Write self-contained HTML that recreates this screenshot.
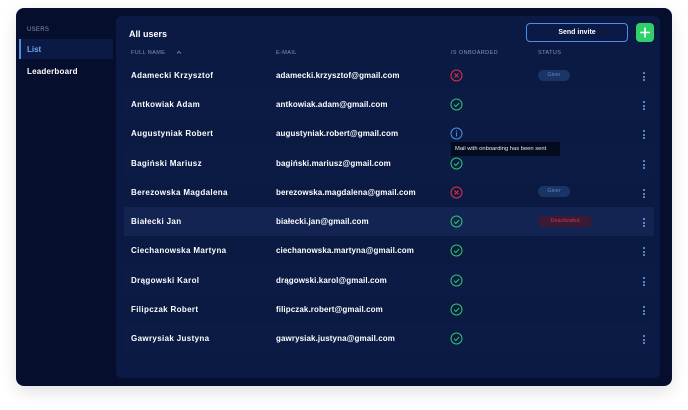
<!DOCTYPE html>
<html><head><meta charset="utf-8"><style>
*{margin:0;padding:0;box-sizing:border-box}
body{width:688px;height:410px;background:#fff;font-family:"Liberation Sans",sans-serif;position:relative;overflow:hidden}
.card{position:absolute;left:16px;top:8px;width:656px;height:378px;background:#050f2d;border-radius:8px;box-shadow:0 6px 16px rgba(0,0,0,.12)}
.side-h{position:absolute;left:27px;top:27px;font-size:6px;color:#8a93b0;letter-spacing:.3px}
.list{position:absolute;left:19px;top:39px;width:94px;height:20px;background:#0a1a44;border-left:2px solid #4d8fe6;color:#6fa6f0;font-size:8px;font-weight:bold;padding:6px 0 0 6px}
.lead{position:absolute;left:27px;top:67px;font-size:8px;font-weight:bold;color:#fff;letter-spacing:.2px}
.panel{position:absolute;left:116px;top:16px;width:544px;height:362px;background:#0b1a45;border-radius:6px}
.title{position:absolute;left:129px;top:29px;color:#fff;font-size:9px;font-weight:bold}
.btn{position:absolute;left:526px;top:23px;width:102px;height:19px;border:1px solid #4d8fe6;border-radius:4px;color:#fff;font-size:7px;font-weight:bold;text-align:center;line-height:17px}
.plus{position:absolute;left:636px;top:23px;width:18px;height:19px;background:#2fd06a;border-radius:4px}
.th{position:absolute;top:50px;font-size:5.5px;color:#8a93b0;letter-spacing:.4px}
.row{position:absolute;left:124px;width:530px;height:29px}
.n{position:absolute;left:131px;font-size:8px;font-weight:bold;color:#fff;letter-spacing:.35px}
.e{position:absolute;left:276px;font-size:8px;font-weight:bold;color:#fff;letter-spacing:.1px}
.ic{position:absolute;left:450px;width:13px;height:13px}
.dots{position:absolute;left:643px;width:2px}
.dots i{display:block;width:2px;height:2px;background:#6fa6f0;margin-bottom:1.5px;border-radius:1px}
.badge{position:absolute;left:538px;height:11px;border-radius:6px;font-size:5.5px;text-align:center;line-height:11px}
</style></head><body>
<div class="card"></div>
<div class="side-h">USERS</div>
<div class="list">List</div>
<div class="lead">Leaderboard</div>
<div class="panel"></div>
<div class="title">All users</div>
<div class="btn">Send invite</div>
<div class="plus"><svg width="18" height="19"><path d="M9 4.5v10M4 9.5h10" stroke="#fff" stroke-width="1.6"/></svg></div>
<div class="th" style="left:131px">FULL NAME</div>
<svg style="position:absolute;left:176px;top:50px" width="6" height="4"><path d="M1 3.5L3 1.5 5 3.5" fill="none" stroke="#8a93b0" stroke-width=".8"/></svg>
<div class="th" style="left:276px">E-MAIL</div>
<div class="th" style="left:451px">IS ONBOARDED</div>
<div class="th" style="left:538px">STATUS</div>

<div class="row" style="top:61px;background:#0b1a43"></div>
<div class="row" style="top:90px;background:#0c1b46"></div>
<div class="row" style="top:119px;background:#0b1a43"></div>
<div class="row" style="top:149px;background:#0c1b46"></div>
<div class="row" style="top:178px;background:#0b1a43"></div>
<div class="row" style="top:207px;background:#132452"></div>
<div class="row" style="top:236px;background:#0b1a43"></div>
<div class="row" style="top:266px;background:#0c1b46"></div>
<div class="row" style="top:295px;background:#0b1a43"></div>
<div class="row" style="top:324px;background:#0c1b46"></div>

<div class="n" style="top:71px">Adamecki Krzysztof</div><div class="e" style="top:71px">adamecki.krzysztof@gmail.com</div>
<div class="n" style="top:100px">Antkowiak Adam</div><div class="e" style="top:100px">antkowiak.adam@gmail.com</div>
<div class="n" style="top:129px">Augustyniak Robert</div><div class="e" style="top:129px">augustyniak.robert@gmail.com</div>
<div class="n" style="top:159px">Bagiński Mariusz</div><div class="e" style="top:159px">bagiński.mariusz@gmail.com</div>
<div class="n" style="top:188px">Berezowska Magdalena</div><div class="e" style="top:188px">berezowska.magdalena@gmail.com</div>
<div class="n" style="top:217px">Białecki Jan</div><div class="e" style="top:217px">białecki.jan@gmail.com</div>
<div class="n" style="top:246px">Ciechanowska Martyna</div><div class="e" style="top:246px">ciechanowska.martyna@gmail.com</div>
<div class="n" style="top:276px">Drągowski Karol</div><div class="e" style="top:276px">drągowski.karol@gmail.com</div>
<div class="n" style="top:305px">Filipczak Robert</div><div class="e" style="top:305px">filipczak.robert@gmail.com</div>
<div class="n" style="top:334px">Gawrysiak Justyna</div><div class="e" style="top:334px">gawrysiak.justyna@gmail.com</div>

<svg class="ic" style="top:69px" viewBox="0 0 13 13"><circle cx="6.5" cy="6.5" r="5.5" fill="none" stroke="#e0304a" stroke-width="1"/><path d="M4.5 4.5l4 4M8.5 4.5l-4 4" stroke="#e0304a" stroke-width="1"/></svg>
<svg class="ic" style="top:98px" viewBox="0 0 13 13"><circle cx="6.5" cy="6.5" r="5.5" fill="none" stroke="#2fc66a" stroke-width="1"/><path d="M4 6.7l1.8 1.8L9.2 5" fill="none" stroke="#2fc66a" stroke-width="1"/></svg>
<svg class="ic" style="top:127px" viewBox="0 0 13 13"><circle cx="6.5" cy="6.5" r="5.5" fill="none" stroke="#4d8fe6" stroke-width="1"/><path d="M6.5 5.5v4" stroke="#4d8fe6" stroke-width="1"/><circle cx="6.5" cy="4" r=".6" fill="#4d8fe6"/></svg>
<svg class="ic" style="top:157px" viewBox="0 0 13 13"><circle cx="6.5" cy="6.5" r="5.5" fill="none" stroke="#2fc66a" stroke-width="1"/><path d="M4 6.7l1.8 1.8L9.2 5" fill="none" stroke="#2fc66a" stroke-width="1"/></svg>
<svg class="ic" style="top:186px" viewBox="0 0 13 13"><circle cx="6.5" cy="6.5" r="5.5" fill="none" stroke="#e0304a" stroke-width="1"/><path d="M4.5 4.5l4 4M8.5 4.5l-4 4" stroke="#e0304a" stroke-width="1"/></svg>
<svg class="ic" style="top:215px" viewBox="0 0 13 13"><circle cx="6.5" cy="6.5" r="5.5" fill="none" stroke="#2fc66a" stroke-width="1"/><path d="M4 6.7l1.8 1.8L9.2 5" fill="none" stroke="#2fc66a" stroke-width="1"/></svg>
<svg class="ic" style="top:244px" viewBox="0 0 13 13"><circle cx="6.5" cy="6.5" r="5.5" fill="none" stroke="#2fc66a" stroke-width="1"/><path d="M4 6.7l1.8 1.8L9.2 5" fill="none" stroke="#2fc66a" stroke-width="1"/></svg>
<svg class="ic" style="top:274px" viewBox="0 0 13 13"><circle cx="6.5" cy="6.5" r="5.5" fill="none" stroke="#2fc66a" stroke-width="1"/><path d="M4 6.7l1.8 1.8L9.2 5" fill="none" stroke="#2fc66a" stroke-width="1"/></svg>
<svg class="ic" style="top:303px" viewBox="0 0 13 13"><circle cx="6.5" cy="6.5" r="5.5" fill="none" stroke="#2fc66a" stroke-width="1"/><path d="M4 6.7l1.8 1.8L9.2 5" fill="none" stroke="#2fc66a" stroke-width="1"/></svg>
<svg class="ic" style="top:332px" viewBox="0 0 13 13"><circle cx="6.5" cy="6.5" r="5.5" fill="none" stroke="#2fc66a" stroke-width="1"/><path d="M4 6.7l1.8 1.8L9.2 5" fill="none" stroke="#2fc66a" stroke-width="1"/></svg>

<div style="position:absolute;left:451px;top:142px;width:109px;height:14px;background:#050b1e;color:#e8ecf5;font-size:5.8px;line-height:14px;padding-left:4px">Mail with onboarding has been sent</div>

<div class="badge" style="top:70px;width:32px;background:#1b3466;color:#5f84c4">Giver</div>
<div class="badge" style="top:186px;width:32px;background:#1b3466;color:#5f84c4">Giver</div>
<div class="badge" style="top:216px;width:54px;background:#3a1a35;color:#d8344c">Deactivated</div>

<div class="dots" style="top:72px"><i></i><i></i><i></i></div>
<div class="dots" style="top:101px"><i></i><i></i><i></i></div>
<div class="dots" style="top:130px"><i></i><i></i><i></i></div>
<div class="dots" style="top:160px"><i></i><i></i><i></i></div>
<div class="dots" style="top:189px"><i></i><i></i><i></i></div>
<div class="dots" style="top:218px"><i></i><i></i><i></i></div>
<div class="dots" style="top:247px"><i></i><i></i><i></i></div>
<div class="dots" style="top:277px"><i></i><i></i><i></i></div>
<div class="dots" style="top:306px"><i></i><i></i><i></i></div>
<div class="dots" style="top:335px"><i></i><i></i><i></i></div>
</body></html>
